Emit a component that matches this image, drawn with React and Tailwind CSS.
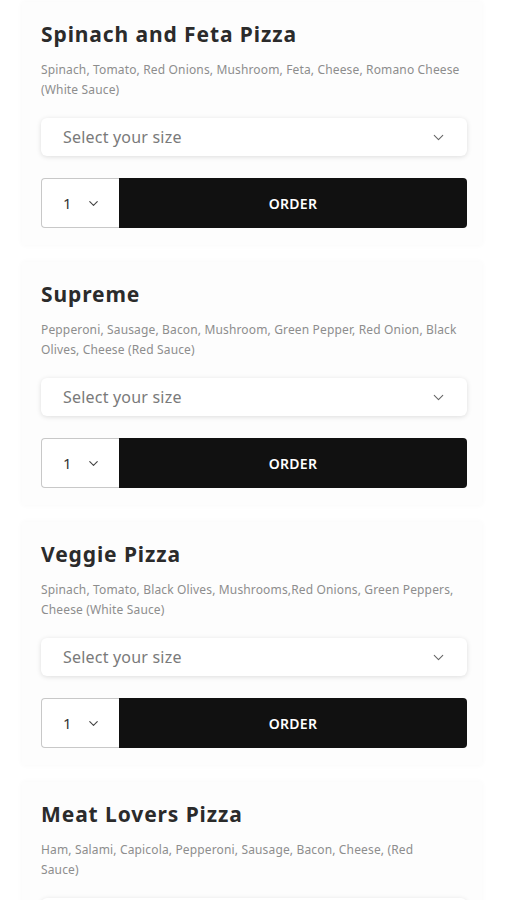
import { ChevronDown } from 'lucide-react';

const PIZZAS = [
  {
    name: 'Spinach and Feta Pizza',
    desc: 'Spinach, Tomato, Red Onions, Mushroom, Feta, Cheese, Romano Cheese (White Sauce)',
  },
  {
    name: 'Supreme',
    desc: 'Pepperoni, Sausage, Bacon, Mushroom, Green Pepper, Red Onion, Black Olives, Cheese (Red Sauce)',
  },
  {
    name: 'Veggie Pizza',
    desc: 'Spinach, Tomato, Black Olives, Mushrooms,Red Onions, Green Peppers, Cheese (White Sauce)',
  },
  {
    name: 'Meat Lovers Pizza',
    desc: 'Ham, Salami, Capicola, Pepperoni, Sausage, Bacon, Cheese, (Red Sauce)',
    narrow: true,
  },
];

function PizzaCard({ pizza }) {
  return (
    <div className="w-[460px] shrink-0 bg-[#fdfdfd] shadow-[0_0_6px_rgba(0,0,0,0.03)] pl-[19px] pr-[15px] pt-[18px] pb-[17px]">
      <h2 className="text-[21px] leading-[28px] font-bold text-[#2b2b2b] tracking-[0.9px]">{pizza.name}</h2>
      <p className={`mt-[12px] text-[12px] leading-[20px] text-[#8d8d8d] tracking-[0.15px] ${pizza.narrow ? 'max-w-[400px]' : ''}`}>
        {pizza.desc}
      </p>

      {/* size select */}
      <div className="mt-[18px] h-[38px] rounded-[6px] bg-white shadow-[0_1px_5px_rgba(0,0,0,0.13)] flex items-center pl-[22px] pr-[20px]">
        <span className="flex-1 text-[16px] text-[#7a7a7a] tracking-[0.2px]">Select your size</span>
        <ChevronDown size={17} strokeWidth={1.5} className="text-[#666]" />
      </div>

      {/* qty + order */}
      <div className="mt-[22px] h-[50px] flex">
        <div className="w-[78px] flex items-center border border-[#c8c8c8] border-r-0 rounded-l-[4px] bg-white pl-[21px] gap-[14px]">
          <span className="text-[15px] text-[#333]">1</span>
          <ChevronDown size={15} strokeWidth={1.8} className="text-[#444]" />
        </div>
        <button className="flex-1 bg-[#111111] rounded-r-[4px] text-white text-[14px] font-semibold tracking-[0.3px]">
          ORDER
        </button>
      </div>
    </div>
  );
}

export default function App() {
  return (
    <div className="h-[900px] overflow-hidden bg-white px-[22px] pt-[2px] flex flex-col gap-[17px]" style={{ fontFamily: '"Noto Sans", Lato, sans-serif' }}>
      {PIZZAS.map(p => (
        <PizzaCard key={p.name} pizza={p} />
      ))}
    </div>
  );
}
